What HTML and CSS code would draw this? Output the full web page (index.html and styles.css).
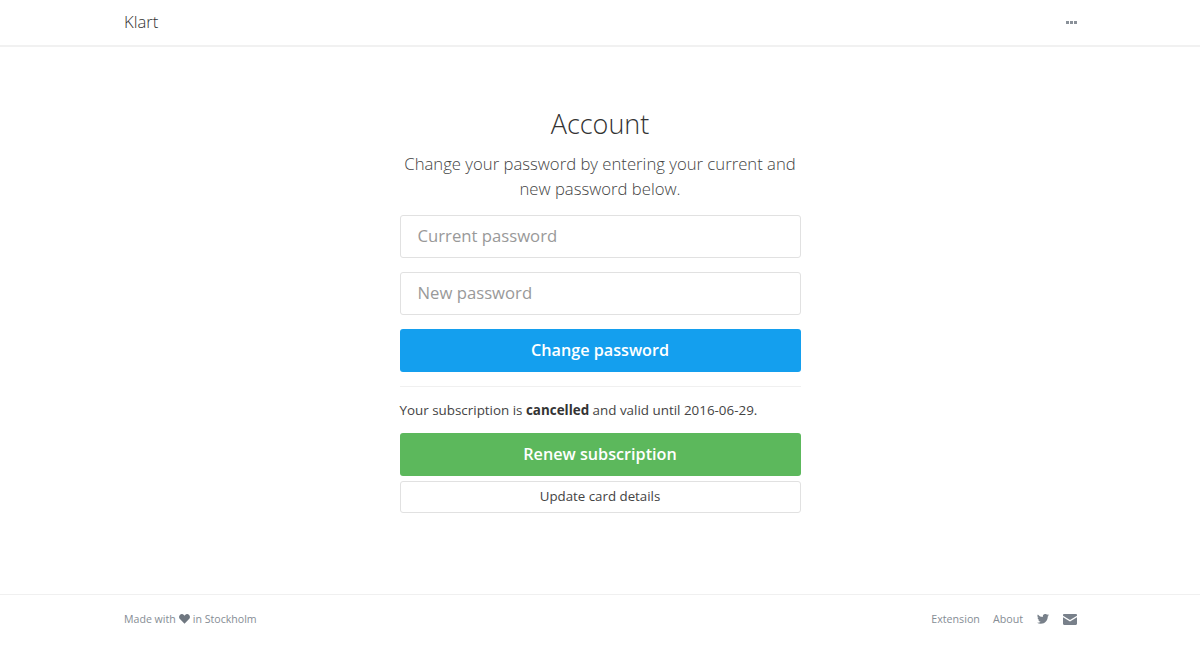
FILE: index.html
```html
<!DOCTYPE html>
<html lang="en">
<head>
<meta charset="utf-8">
<title>Klart</title>
<link rel="stylesheet" href="styles.css">
</head>
<body>
<header class="topbar">
  <div class="wrap topbar-inner">
    <a class="brand">Klart</a>
    <svg class="dots" width="11" height="3" viewBox="0 0 11 3"><rect width="3" height="3" x="0"/><rect width="3" height="3" x="4"/><rect width="3" height="3" x="8"/></svg>
  </div>
</header>
<main class="main">
  <section class="panel">
    <h1 class="title">Account</h1>
    <p class="lead">Change your password by entering your current and new password below.</p>
    <form class="form">
      <input class="field" type="password" placeholder="Current password">
      <input class="field" type="password" placeholder="New password">
      <button class="btn btn-blue" type="button">Change password</button>
    </form>
    <hr class="rule">
    <p class="status">Your subscription is <strong>cancelled</strong> and valid until 2016-06-29.</p>
    <button class="btn btn-green" type="button">Renew subscription</button>
    <button class="btn-small" type="button">Update card details</button>
  </section>
</main>
<footer class="footer">
  <div class="wrap footer-inner">
    <div class="made">Made with
      <svg class="heart" width="12" height="11" viewBox="0 0 12 11"><path d="M6 10.6 1 5.6C-.3 4.2-.3 2.2.9 1 2.2-.2 4.2-.1 5.3 1L6 1.8l.7-.8C7.800-.1 9.800-.2 11.100 1c1.200 1.200 1.200 3.200-.1 4.600z"/></svg>
      in Stockholm</div>
    <nav class="links">
      <a class="link">Extension</a>
      <a class="link">About</a>
      <svg class="twitter" width="12" height="10" viewBox="0 0 24 20"><path d="M24 2.400a9.800 9.800 0 0 1-2.800.8A4.900 4.900 0 0 0 23.300.5a9.800 9.800 0 0 1-3.100 1.200A4.900 4.900 0 0 0 11.800 6.200 14 14 0 0 1 1.700.9a4.900 4.900 0 0 0 1.500 6.600 4.900 4.900 0 0 1-2.200-.6c0 2.400 1.700 4.400 3.900 4.900a4.900 4.900 0 0 1-2.200.1 4.900 4.900 0 0 0 4.600 3.400A9.900 9.900 0 0 1 0 17.300 14 14 0 0 0 7.500 19.500c9.100 0 14.300-7.700 14-14.600A10 10 0 0 0 24 2.400z"/></svg>
      <svg class="mail" width="14" height="11" viewBox="0 0 14 11"><path d="M1.200 0h11.600C13.500 0 14 .5 14 1.200v.5L7 6 0 1.700v-.5C0 .5.500 0 1.200 0z"/><path d="M0 3.300 7 7.600l7-4.300v6.500c0 .7-.5 1.200-1.200 1.200H1.200C.5 11 0 10.500 0 9.800z"/></svg>
    </nav>
  </div>
</footer>
</body>
</html>
```
FILE: styles.css
```css
* { box-sizing: border-box; }
html, body { margin: 0; height: 100%; }
body {
  display: flex;
  flex-direction: column;
  height: 672px;
  overflow: hidden;
  background: #fff;
  color: #333;
  font-family: "Open Sans", "Noto Sans", sans-serif;
}
.wrap {
  width: 952px;
  margin: 0 auto;
  display: flex;
  justify-content: space-between;
  align-items: center;
}
.topbar {
  height: 47px;
  border-bottom: 2px solid #f1f1f1;
}
.topbar-inner { height: 45px; padding-bottom: 2px; }
.brand { font-size: 16.700px; font-weight: 300; color: #333; }
.dots { fill: #8a9199; margin: 2px -1px 0 0; }
.main {
  flex: 1;
  display: flex;
  justify-content: center;
  padding-top: 59px;
}
.panel { width: 401px; display: flex; flex-direction: column; }
.title {
  margin: 0 0 9px;
  font-size: 27px;
  line-height: 36px;
  font-weight: 300;
  text-align: center;
  color: #333;
}
.lead {
  margin: 0 0 14px;
  font-size: 16.700px;
  line-height: 25px;
  font-weight: 300;
  text-align: center;
  color: #444;
}
.form { display: flex; flex-direction: column; gap: 14px; }
.field {
  height: 43px;
  padding: 0 17px 2px;
  border: 1px solid #e1e1e1;
  border-radius: 3px;
  font: 300 16.700px "Open Sans", sans-serif;
  background: #fff;
}
.field::placeholder { color: #999; opacity: 1; font-weight: 400; }
.btn {
  height: 43px;
  padding: 0 0 2px;
  border: 0;
  border-radius: 3px;
  color: #fff;
  font: 600 16.200px "Open Sans", sans-serif;
}
.btn-blue { background: #149fee; }
.btn-green { background: #5cb85c; }
.rule {
  width: 100%;
  margin: 14px 0 0;
  border: 0;
  border-top: 1px solid #f0f0f0;
}
.status {
  margin: 14px 0;
  font-size: 13.400px;
  line-height: 18px;
  color: #444;
}
.status strong { color: #333; font-weight: 700; }
.btn-small {
  height: 32px;
  padding: 0 0 2px;
  margin-top: 5px;
  border: 1px solid #e1e1e1;
  border-radius: 3px;
  background: #fff;
  color: #444;
  font: 400 13.300px "Open Sans", sans-serif;
}
.footer {
  height: 78px;
  border-top: 1px solid #f0f0f0;
}
.footer-inner { height: 48px; }
.made {
  display: flex;
  align-items: center;
  gap: 3px;
  font-size: 10.600px;
  color: #868d95;
}
.heart { fill: #6f7780; width: 11px; height: 10px; }
.links { display: flex; align-items: center; color: #868d95; }
.link { font-size: 10.700px; margin-right: 13px; }
.twitter { fill: #78808a; margin-right: 14px; margin-top: -1px; margin-left: 1px; }
.mail { fill: #78808a; margin-right: -1px; }
```
